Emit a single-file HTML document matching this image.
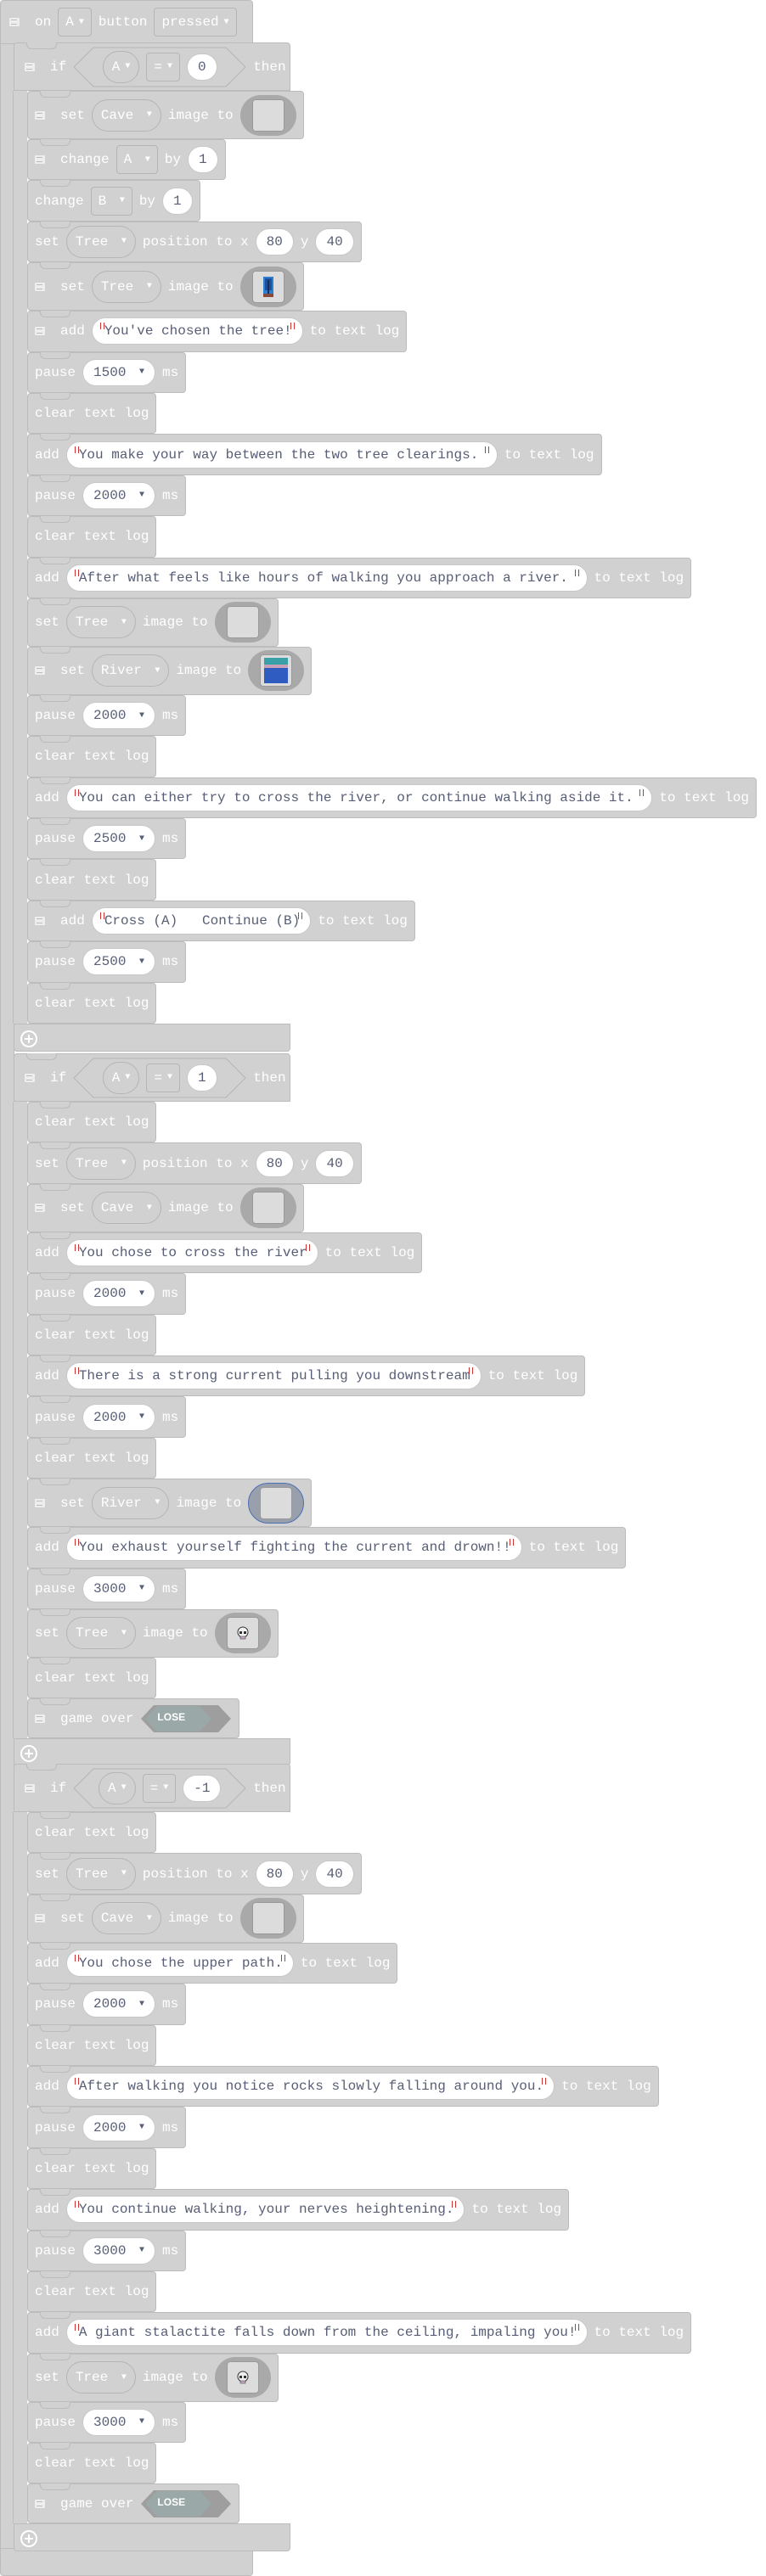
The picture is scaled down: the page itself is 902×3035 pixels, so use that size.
<!DOCTYPE html>
<html><head><meta charset="utf-8">
<style>
*{box-sizing:border-box;margin:0;padding:0}
body{width:902px;height:3035px;background:#fff;position:relative;overflow:hidden;font-family:"Liberation Mono","DejaVu Sans Mono",monospace;font-size:16px;color:#fff}
.bg{position:absolute;background:#d1d1d1;border:1px solid #bcbcbc}
.if{position:absolute;left:16px;width:326px}
.hd{height:57px;width:326px;background:#d1d1d1;border:1px solid #bcbcbc;border-radius:4px 4px 0 0;display:flex;align-items:center;padding-left:12px;gap:8px;position:relative;z-index:2}
.body{border-left:16px solid #d1d1d1;position:relative}
.body:before{content:"";position:absolute;left:-17px;top:0;bottom:0;width:1px;background:#bcbcbc}
.ft{height:33px;width:326px;background:#d1d1d1;border:1px solid #bcbcbc;border-radius:0 0 4px 4px;position:relative}
.plus{position:absolute;left:7px;top:7px;width:20px;height:20px;border:2px solid #fff;border-radius:50%}
.plus:before{content:"";position:absolute;left:3px;top:7px;width:10px;height:2px;background:#fff}
.plus:after{content:"";position:absolute;left:7px;top:3px;width:2px;height:10px;background:#fff}
.s{height:48.4px;width:fit-content;background:#d1d1d1;border:1px solid #bcbcbc;border-radius:4px;display:flex;align-items:center;padding:0 8px;gap:8px;white-space:pre;position:relative}
.s.i{height:57px}
.s:before,.hd.n:before{content:"";position:absolute;left:14px;top:-1px;width:34px;height:7px;border-bottom:1px solid #bcbcbc;border-left:1px solid #bcbcbc;border-right:1px solid #bcbcbc;border-radius:0 0 6px 6px;background:#d1d1d1}
.cm{width:12px;height:10px;background:#eee;border-radius:1px;margin-right:10px;position:relative}
.cm:after{content:"";position:absolute;left:2px;top:2px;width:7px;height:4px;border-top:1px solid #bbb;border-bottom:1px solid #bbb}
.dd{height:38px;border:1px solid #b5b5b5;border-radius:19px;padding:0 10px;display:flex;align-items:center;gap:6px}
.sq{height:34px;border:1px solid #b5b5b5;border-radius:4px;padding:0 8px;display:flex;align-items:center;gap:6px}
.tri{font-size:10px}
.num{height:32px;background:#fff;border-radius:16px;padding:0 12px;color:#575e75;display:flex;align-items:center;gap:6px;border:1px solid #c8c8c8}
.str{height:32px;background:#fff;border-radius:16px;padding:0 12px 0 14px;color:#575e75;display:flex;align-items:center;border:1px solid #c8c8c8;position:relative}
.str:before,.str:after{content:"";position:absolute;top:5px;width:3px;height:8px;border-left:1px solid #c33;border-right:1px solid #c33}
.str:before{left:9px}.str:after{right:9px}
.img{width:66px;height:48px;border-radius:24px;background:#a9a9a9;display:flex;align-items:center;justify-content:center}
.img.b{border:1px solid #4a6fb3;background:#9aa0ab}
.img i{display:block;width:38px;height:38px;background:#dcdcdc;border-radius:4px;border:1px solid #999;display:flex;align-items:center;justify-content:center}
.hex{position:relative;width:204px;height:48px;display:flex;align-items:center;justify-content:center;gap:8px}
.hex svg{position:absolute;left:0;top:0}
.hex>*{position:relative}
.lose{position:relative;width:108px;height:34px}
.lose svg{position:absolute;left:0;top:0}
.lose span{position:absolute;left:20px;top:8px;font-family:"Liberation Sans",sans-serif;font-size:12px;font-weight:bold}
</style></head><body>

<!-- hat -->
<div class="bg" style="left:0;top:0;width:298px;height:52px;border-radius:4px 4px 0 0;z-index:1;display:flex;align-items:center;padding-left:10px;gap:8px">
<span class="cm"></span><span>on</span><span class="sq">A <span class="tri">▼</span></span><span>button</span><span class="sq">pressed <span class="tri">▼</span></span>
</div>
<div class="bg" style="left:0;top:40px;width:17px;height:2975px;border-top:none;border-bottom:none"></div>
<div class="bg" style="left:0;top:3002px;width:298px;height:33px;border-radius:0 0 4px 4px"></div>

<!-- IF 1 -->
<div class="if" style="top:50px">
<div class="hd n"><span class="cm"></span><span>if</span>
<div class="hex"><svg width="204" height="48"><polygon points="24,1 180,1 203,24 180,47 24,47 1,24" fill="#d1d1d1" stroke="#b5b5b5"/></svg>
<span class="dd">A <span class="tri">▼</span></span><span class="sq">= <span class="tri">▼</span></span><span class="num">0</span></div><span>then</span></div>
<div class="body">
<div class="s i"><span class="cm"></span>set<span class="dd">Cave <span class="tri">▼</span></span>image to<span class="img"><i></i></span></div>
<div class="s"><span class="cm"></span>change<span class="sq">A <span class="tri">▼</span></span>by<span class="num">1</span></div>
<div class="s">change<span class="sq">B <span class="tri">▼</span></span>by<span class="num">1</span></div>
<div class="s">set<span class="dd">Tree <span class="tri">▼</span></span>position to x<span class="num">80</span>y<span class="num">40</span></div>
<div class="s i"><span class="cm"></span>set<span class="dd">Tree <span class="tri">▼</span></span>image to<span class="img"><i><svg width="16" height="28"><rect x="2" y="2" width="12" height="20" fill="#2f7fd0"/><rect x="4" y="4" width="8" height="14" fill="#1d4f9c"/><rect x="7" y="6" width="2" height="16" fill="#1b2c55"/><rect x="2" y="22" width="12" height="4" fill="#8a4a3a"/></svg></i></span></div>
<div class="s"><span class="cm"></span>add<span class="str">You've chosen the tree!</span>to text log</div>
<div class="s">pause<span class="num">1500 <span class="tri">▼</span></span>ms</div>
<div class="s">clear text log</div>
<div class="s">add<span class="str">You make your way between the two tree clearings. </span>to text log</div>
<div class="s">pause<span class="num">2000 <span class="tri">▼</span></span>ms</div>
<div class="s">clear text log</div>
<div class="s">add<span class="str">After what feels like hours of walking you approach a river. </span>to text log</div>
<div class="s i">set<span class="dd">Tree <span class="tri">▼</span></span>image to<span class="img"><i></i></span></div>
<div class="s i"><span class="cm"></span>set<span class="dd">River <span class="tri">▼</span></span>image to<span class="img"><i><svg width="28" height="30"><rect x="0" y="0" width="28" height="8" fill="#3aa0a8"/><rect x="0" y="8" width="28" height="4" fill="#c9a0b8"/><rect x="0" y="12" width="28" height="18" fill="#2f5cc0"/></svg></i></span></div>
<div class="s">pause<span class="num">2000 <span class="tri">▼</span></span>ms</div>
<div class="s">clear text log</div>
<div class="s">add<span class="str">You can either try to cross the river, or continue walking aside it. </span>to text log</div>
<div class="s">pause<span class="num">2500 <span class="tri">▼</span></span>ms</div>
<div class="s">clear text log</div>
<div class="s"><span class="cm"></span>add<span class="str">Cross (A)   Continue (B)</span>to text log</div>
<div class="s">pause<span class="num">2500 <span class="tri">▼</span></span>ms</div>
<div class="s">clear text log</div>
</div>
<div class="ft"><span class="plus"></span></div>
</div>

<!-- IF 2 -->
<div class="if" style="top:1241px">
<div class="hd n"><span class="cm"></span><span>if</span>
<div class="hex"><svg width="204" height="48"><polygon points="24,1 180,1 203,24 180,47 24,47 1,24" fill="#d1d1d1" stroke="#b5b5b5"/></svg>
<span class="dd">A <span class="tri">▼</span></span><span class="sq">= <span class="tri">▼</span></span><span class="num">1</span></div><span>then</span></div>
<div class="body">
<div class="s">clear text log</div>
<div class="s">set<span class="dd">Tree <span class="tri">▼</span></span>position to x<span class="num">80</span>y<span class="num">40</span></div>
<div class="s i"><span class="cm"></span>set<span class="dd">Cave <span class="tri">▼</span></span>image to<span class="img"><i></i></span></div>
<div class="s">add<span class="str">You chose to cross the river</span>to text log</div>
<div class="s">pause<span class="num">2000 <span class="tri">▼</span></span>ms</div>
<div class="s">clear text log</div>
<div class="s">add<span class="str">There is a strong current pulling you downstream</span>to text log</div>
<div class="s">pause<span class="num">2000 <span class="tri">▼</span></span>ms</div>
<div class="s">clear text log</div>
<div class="s i"><span class="cm"></span>set<span class="dd">River <span class="tri">▼</span></span>image to<span class="img b"><i></i></span></div>
<div class="s">add<span class="str">You exhaust yourself fighting the current and drown!!</span>to text log</div>
<div class="s">pause<span class="num">3000 <span class="tri">▼</span></span>ms</div>
<div class="s i">set<span class="dd">Tree <span class="tri">▼</span></span>image to<span class="img"><i><svg width="16" height="16"><circle cx="8" cy="7" r="6" fill="#f0f0f0" stroke="#333"/><rect x="4" y="6" width="3" height="3" fill="#333"/><rect x="9" y="6" width="3" height="3" fill="#333"/><rect x="5" y="12" width="6" height="3" fill="#c8a8c0" stroke="#333" stroke-width=".5"/></svg></i></span></div>
<div class="s">clear text log</div>
<div class="s" style="height:47px"><span class="cm"></span>game over<span class="lose"><svg width="108" height="34"><polygon points="16,1 92,1 107,17 92,33 16,33 1,17" fill="#9e9e9e"/><polygon points="20,2 70,2 84,17 70,32 20,32 6,17" fill="#9aa9a8"/></svg><span>LOSE</span></span></div>
</div>
<div class="ft"><span class="plus"></span></div>
</div>

<!-- IF 3 -->
<div class="if" style="top:2078px">
<div class="hd n"><span class="cm"></span><span>if</span>
<div class="hex"><svg width="204" height="48"><polygon points="24,1 180,1 203,24 180,47 24,47 1,24" fill="#d1d1d1" stroke="#b5b5b5"/></svg>
<span class="dd">A <span class="tri">▼</span></span><span class="sq">= <span class="tri">▼</span></span><span class="num">-1</span></div><span>then</span></div>
<div class="body">
<div class="s">clear text log</div>
<div class="s">set<span class="dd">Tree <span class="tri">▼</span></span>position to x<span class="num">80</span>y<span class="num">40</span></div>
<div class="s i"><span class="cm"></span>set<span class="dd">Cave <span class="tri">▼</span></span>image to<span class="img"><i></i></span></div>
<div class="s">add<span class="str">You chose the upper path.</span>to text log</div>
<div class="s">pause<span class="num">2000 <span class="tri">▼</span></span>ms</div>
<div class="s">clear text log</div>
<div class="s">add<span class="str">After walking you notice rocks slowly falling around you.</span>to text log</div>
<div class="s">pause<span class="num">2000 <span class="tri">▼</span></span>ms</div>
<div class="s">clear text log</div>
<div class="s">add<span class="str">You continue walking, your nerves heightening.</span>to text log</div>
<div class="s">pause<span class="num">3000 <span class="tri">▼</span></span>ms</div>
<div class="s">clear text log</div>
<div class="s">add<span class="str">A giant stalactite falls down from the ceiling, impaling you!</span>to text log</div>
<div class="s i">set<span class="dd">Tree <span class="tri">▼</span></span>image to<span class="img"><i><svg width="16" height="16"><circle cx="8" cy="7" r="6" fill="#f0f0f0" stroke="#333"/><rect x="4" y="6" width="3" height="3" fill="#333"/><rect x="9" y="6" width="3" height="3" fill="#333"/><rect x="5" y="12" width="6" height="3" fill="#c8a8c0" stroke="#333" stroke-width=".5"/></svg></i></span></div>
<div class="s">pause<span class="num">3000 <span class="tri">▼</span></span>ms</div>
<div class="s">clear text log</div>
<div class="s" style="height:47px"><span class="cm"></span>game over<span class="lose"><svg width="108" height="34"><polygon points="16,1 92,1 107,17 92,33 16,33 1,17" fill="#9e9e9e"/><polygon points="20,2 70,2 84,17 70,32 20,32 6,17" fill="#9aa9a8"/></svg><span>LOSE</span></span></div>
</div>
<div class="ft"><span class="plus"></span></div>
</div>

</body></html>
